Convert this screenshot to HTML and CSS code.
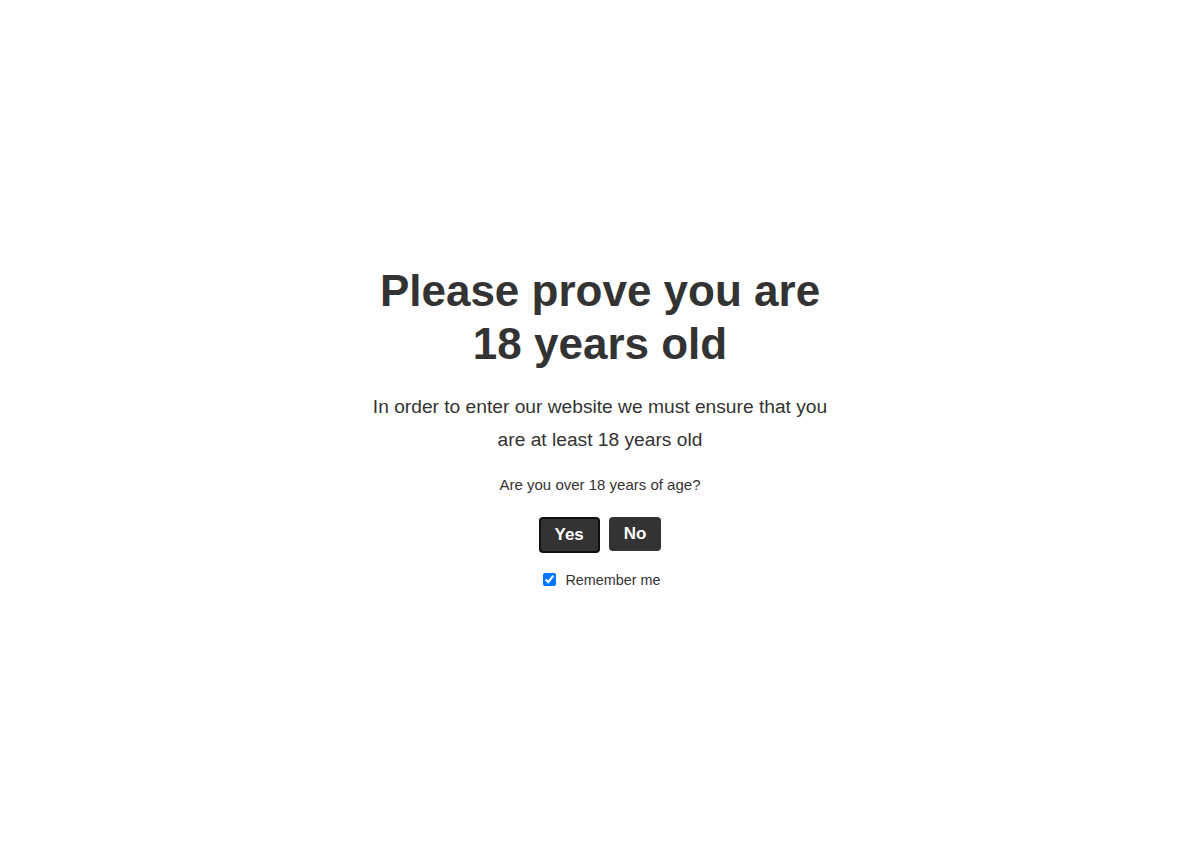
FILE: index.html
```html
<!DOCTYPE html>
<html>
<head>
<meta charset="utf-8">
<link rel="stylesheet" href="styles.css">
</head>
<body>
<div class="page">
  <div class="box">
    <h1 class="title">Please prove you are 18 years old</h1>
    <p class="desc">In order to enter our website we must ensure that you are at least 18 years old</p>
    <p class="question">Are you over 18 years of age?</p>
    <div class="buttons">
      <button class="btn btn-yes">Yes</button>
      <button class="btn btn-no">No</button>
    </div>
    <label class="remember"><input type="checkbox" checked> Remember me</label>
  </div>
</div>
</body>
</html>
```
FILE: styles.css
```css
html, body { margin: 0; padding: 0; background: #fff; }
body { font-family: "Liberation Sans", Arial, sans-serif; color: #333; }
.page { min-height: 846px; padding-top: 4px; display: flex; align-items: center; justify-content: center; }
.box { width: 470px; text-align: center; }
.title { font-size: 44px; line-height: 53px; font-weight: 700; margin: 0 0 20px; color: #333; }
.desc { font-size: 19.2px; line-height: 33px; margin: 0 0 19px; color: #333; }
.question { font-size: 15px; line-height: 20px; margin: 0 0 22px; color: #333; }
.buttons { display: flex; justify-content: center; align-items: flex-start; gap: 9px; margin-bottom: 19px; }
.btn { font-family: "Liberation Sans", Arial, sans-serif; font-size: 17px; font-weight: 700; color: #fff; background: #333; border: 0; border-radius: 4px; padding: 0 15px; height: 34px; }
.btn-yes { border: 2px solid #111; height: 36px; padding: 0 14px; }
.remember { display: inline-flex; align-items: center; gap: 9px; font-size: 14.4px; padding-left: 4px; }
.remember input { margin: 0; width: 13px; height: 13px; }
```
